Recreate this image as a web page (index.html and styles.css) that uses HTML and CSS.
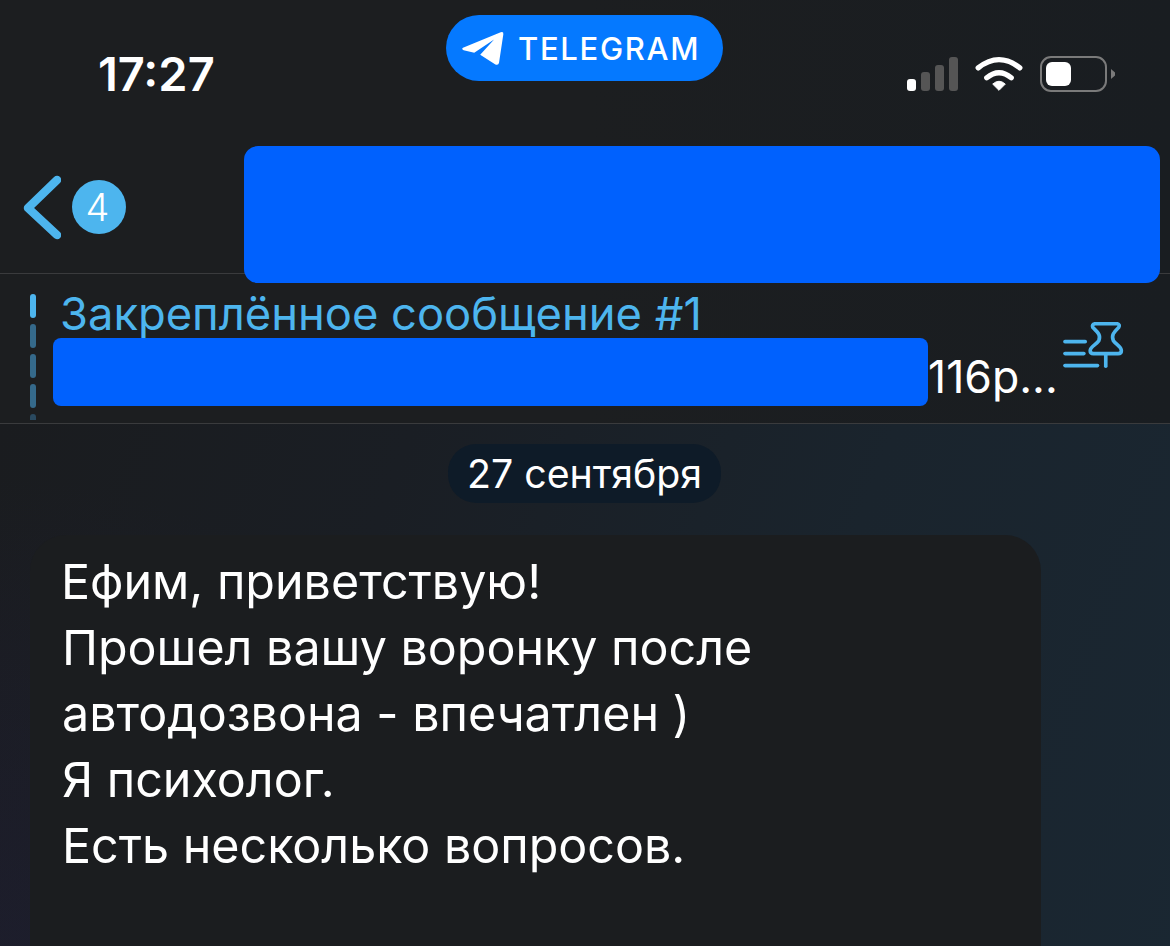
FILE: index.html
```html
<!DOCTYPE html>
<html>
  <head>
    <title>Telegram</title>
    <meta charset="UTF-8">
    <link rel="stylesheet" href="styles.css">
  </head>
  <body>
    <div class="screen">
      <!-- status bar -->
      <div class="status-bar">
        <div class="time">17:27</div>
        <div class="app-pill">
          <svg class="plane" viewBox="60 90 130 110"><path d="M66 143 L180 96 Q189 93 188 102 L175 188 Q173 197 164 193 L118 164 L160 118 L100 158 L68 150 Q60 147 66 143Z" fill="#fff"/></svg>
          <span>TELEGRAM</span>
        </div>
        <div class="status-icons">
          <svg class="signal" viewBox="0 0 51 34">
            <rect x="0" y="22" width="9" height="12" rx="3" fill="#fff"/>
            <rect x="14" y="15" width="9" height="19" rx="3" fill="#555"/>
            <rect x="28" y="8" width="9" height="26" rx="3" fill="#555"/>
            <rect x="42" y="0" width="9" height="34" rx="3" fill="#555"/>
          </svg>
          <svg class="wifi" viewBox="250 45 150 115">
            <path d="M262 84 Q325 34 388 84" fill="none" stroke="#fff" stroke-width="16" stroke-linecap="round"/>
            <path d="M288 114 Q325 84 362 114" fill="none" stroke="#fff" stroke-width="16" stroke-linecap="round"/>
            <path d="M306 133 Q325 116 344 133 L325 152Z" fill="#fff" stroke="#fff" stroke-width="3" stroke-linejoin="round"/>
          </svg>
          <div class="battery">
            <div class="battery-body"><div class="battery-fill"></div></div>
            <div class="battery-nub"></div>
          </div>
        </div>
      </div>

      <!-- chat header -->
      <div class="chat-header">
        <svg class="back" viewBox="0 0 38 66"><path d="M34 5 L5 33 L34 60" fill="none" stroke="#4db5ee" stroke-width="8.5" stroke-linecap="round" stroke-linejoin="round"/></svg>
        <div class="badge">4</div>
        <div class="redact redact-title"></div>
      </div>

      <!-- pinned message -->
      <div class="pinned">
        <div class="pin-bars">
          <span class="pin-bar on"></span>
          <span class="pin-bar"></span>
          <span class="pin-bar"></span>
          <span class="pin-bar"></span>
          <span class="pin-bar last"></span>
        </div>
        <div class="pin-text">
          <div class="pin-title">Закреплённое сообщение #1</div>
          <div class="pin-row">
            <div class="redact redact-pin"></div>
            <span class="pin-end">116р...</span>
          </div>
        </div>
        <svg class="pin-icon" viewBox="485 60 190 150" fill="none" stroke="#4db5ee" stroke-width="11" stroke-linecap="round" stroke-linejoin="round">
          <path d="M494 125 H555"/>
          <path d="M494 161 H551"/>
          <path d="M494 197 H592"/>
          <path d="M617 162 V199"/>
          <path d="M584 71 H652 Q661 73 656 82 C644 94 632 104 640 122 C648 134 664 140 664 152 Q664 161 654 161 H580 Q570 161 570 152 C570 140 588 134 596 122 C604 104 590 94 578 82 Q574 73 584 71Z"/>
        </svg>
      </div>

      <!-- messages -->
      <div class="chat">
        <div class="date-pill">27 сентября</div>
        <div class="bubble">
          Ефим, приветствую!<br>
          Прошел вашу воронку после<br>
          автодозвона - впечатлен )<br>
          Я психолог.<br>
          Есть несколько вопросов.
        </div>
      </div>
    </div>
  </body>
</html>
```

FILE: styles.css
```css
html, body {
  margin: 0;
  padding: 0;
}

.screen {
  width: 1170px;
  height: 946px;
  overflow: hidden;
  display: flex;
  flex-direction: column;
  background: linear-gradient(90deg, #1c1e20 0%, #1c1e20 50%, #191d21 100%);
  color: white;
  font-family: Inter, "Liberation Sans", sans-serif;
}

/* Status bar */
.status-bar {
  height: 146px;
  flex: none;
  display: grid;
  grid-template-columns: 446px 277px 1fr;
  align-items: start;
}

.time {
  padding: 49px 0 0 98px;
  font-size: 47px;
  line-height: 50px;
  font-weight: 600;
}

.app-pill {
  margin-top: 15px;
  height: 66px;
  border-radius: 33px;
  background-color: #0579ff;
  display: flex;
  align-items: center;
  padding-left: 15px;
  gap: 14px;
  font-size: 31px;
  font-weight: 500;
  letter-spacing: 1.7px;
}

.plane {
  width: 43px;
  height: 37px;
}

.status-icons {
  padding: 55px 0 0 184px;
  display: flex;
  align-items: flex-start;
}

.signal {
  width: 51px;
  height: 34px;
  margin-top: 2px;
}

.wifi {
  width: 50px;
  height: 38px;
  margin-left: 16px;
}

.battery {
  margin-left: 16px;
  margin-top: 1px;
  display: flex;
  align-items: center;
  gap: 4px;
}

.battery-body {
  box-sizing: border-box;
  width: 67px;
  height: 36px;
  border: 2.5px solid #7a7a7a;
  border-radius: 11px;
  padding: 3.5px;
}

.battery-fill {
  width: 25px;
  height: 24px;
  background-color: white;
  border-radius: 6px;
}

.battery-nub {
  width: 4px;
  height: 10px;
  background-color: #7a7a7a;
  clip-path: polygon(0 0, 100% 35%, 100% 65%, 0 100%);
}

/* Chat header */
.chat-header {
  height: 127px;
  flex: none;
  border-bottom: 1px solid #3a3b3d;
  display: flex;
  align-items: flex-start;
}

.back {
  width: 38px;
  height: 66px;
  margin: 29px 0 0 23px;
}

.badge {
  width: 54px;
  height: 54px;
  margin: 34px 0 0 11px;
  border-radius: 50%;
  background-color: #4db5ee;
  font-size: 38px;
  font-weight: 300;
  line-height: 54px;
  text-align: center;
  text-indent: -3px;
}

.redact {
  background-color: #0061fe;
}

.redact-title {
  width: 916px;
  height: 137px;
  margin-left: 118px;
  border-radius: 14px;
  flex: none;
}

/* Pinned message */
.pinned {
  height: 149px;
  flex: none;
  border-bottom: 1px solid #3a3b3d;
  display: flex;
  align-items: flex-start;
}

.pin-bars {
  width: 6px;
  margin: 20px 0 0 30px;
  display: flex;
  flex-direction: column;
  gap: 6px;
}

.pin-bar {
  height: 24px;
  border-radius: 3px;
  background-color: #356a8b;
}

.pin-bar.on {
  background-color: #4db5ee;
}

.pin-bar.last {
  height: 6px;
  border-radius: 3px 3px 0 0;
  background-color: #2a4a60;
}

.pin-text {
  width: 1010px;
  margin-left: 17px;
}

.pin-title {
  padding: 16px 0 0 7px;
  height: 48px;
  font-size: 45.3px;
  line-height: 48px;
  color: #4db5ee;
  white-space: nowrap;
}

.pin-row {
  display: flex;
  align-items: flex-start;
}

.redact-pin {
  width: 875px;
  height: 68px;
  border-radius: 8px;
  flex: none;
}

.pin-end {
  padding-top: 5px;
  font-size: 44.6px;
  line-height: 68px;
}

.pin-icon {
  width: 63px;
  height: 50px;
  margin: 46px 0 0 -1px;
  flex: none;
}

/* Messages */
.chat {
  flex: 1;
  display: flex;
  flex-direction: column;
  align-items: flex-start;
  padding-top: 20px;
  background:
    radial-gradient(circle at 0 100%, rgba(32, 30, 56, 0.5), transparent 40%),
    linear-gradient(110deg, #1a1c1f 0%, #1a1e24 30%, #1a242d 65%, #1a2732 100%);
}

.date-pill {
  margin-left: 448px;
  width: 273px;
  height: 59px;
  border-radius: 28px;
  background-color: #0e1b28;
  font-size: 39.3px;
  line-height: 59px;
  text-align: center;
}

.bubble {
  width: 947px;
  margin: 32px 0 0 30px;
  padding: 14px 32px 120px;
  border-radius: 36px 36px 0 0;
  background-color: #1b1d1f;
  font-size: 48.4px;
  line-height: 66px;
  text-indent: -1px;
}
```
